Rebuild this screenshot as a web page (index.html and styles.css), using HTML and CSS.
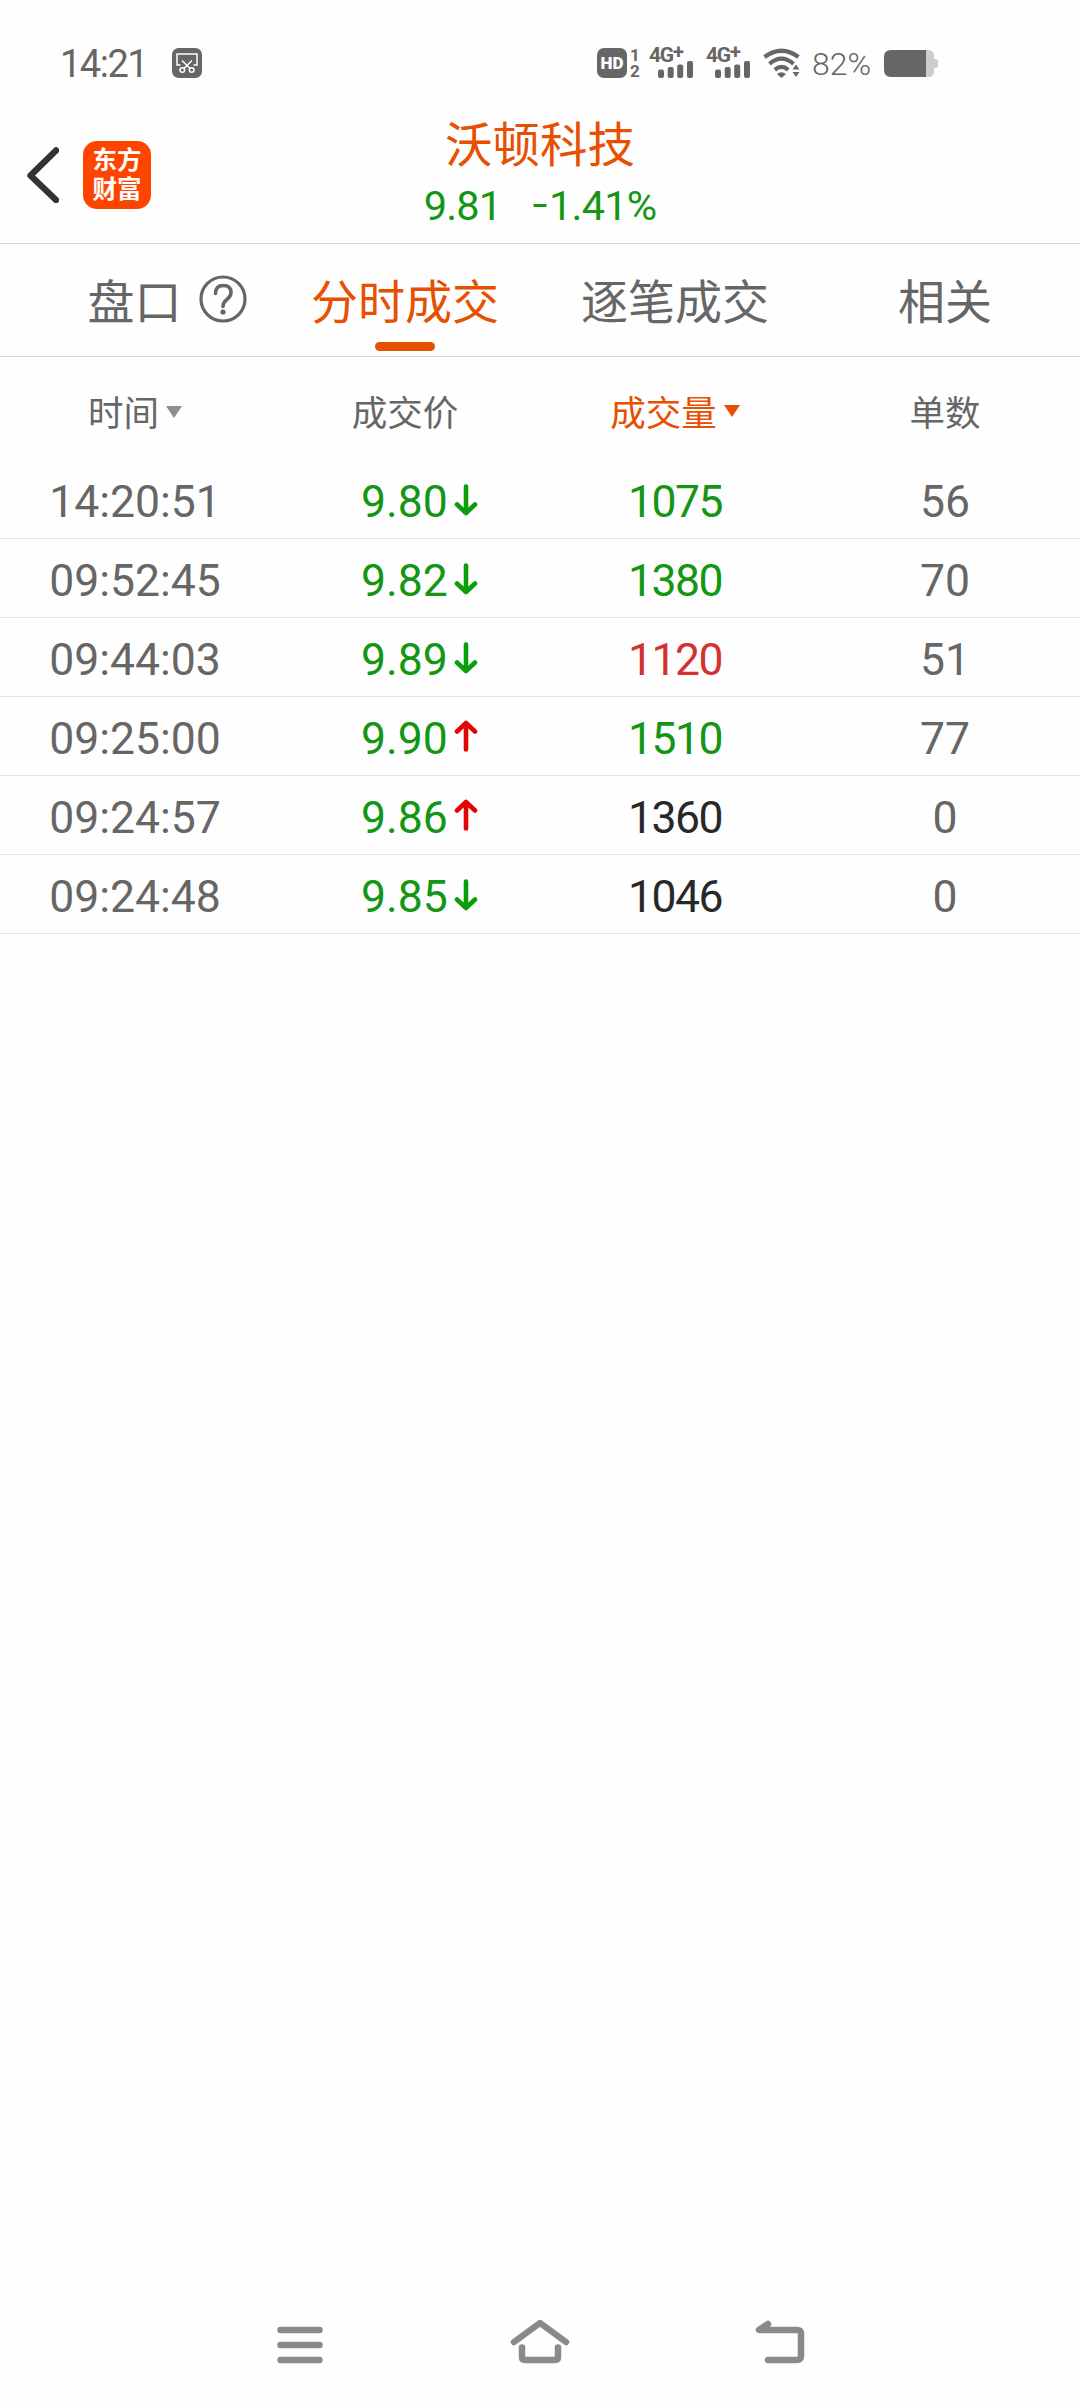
FILE: index.html
```
<!DOCTYPE html>
<html lang="zh-CN">
<head>
    <meta charset="UTF-8">
    <meta name="viewport" content="width=device-width, initial-scale=1.0">
    <title>沃顿科技 - 分时成交</title>
    <link rel="stylesheet" href="styles.css">
</head>
<body>

    <svg class="sprite" xmlns="http://www.w3.org/2000/svg">
        <symbol id="arrow-down" viewBox="0 0 24 34">
            <path d="M12 3.5V30M3 21.5L12 30L21 21.5" fill="none" stroke="currentColor" stroke-width="4.6" stroke-linecap="round" stroke-linejoin="round"/>
        </symbol>
        <symbol id="arrow-up" viewBox="0 0 24 34">
            <path d="M12 30.5V4M3 12.5L12 4L21 12.5" fill="none" stroke="currentColor" stroke-width="4.6" stroke-linecap="round" stroke-linejoin="round"/>
        </symbol>
        <symbol id="signal" viewBox="0 0 36 17">
            <rect x="0" y="8.5" width="6" height="8.5" rx="2"/>
            <rect x="9.7" y="6" width="6" height="11" rx="2"/>
            <rect x="19.2" y="3.5" width="6" height="13.5" rx="2"/>
            <rect x="29" y="0" width="6" height="17" rx="2"/>
        </symbol>
    </svg>

    <div class="status-bar">
        <span class="clock">14:21</span>
        <svg class="clip-icon" viewBox="0 0 30 30">
            <rect width="30" height="30" rx="6.5" fill="#666"/>
            <g fill="none" stroke="#fff" stroke-width="1.5">
                <path d="M8.5 17H5V6H25V17H21.5"/>
                <path d="M10 12.5L18 20.5M20 12.5L12 20.5"/>
                <circle cx="10.3" cy="22" r="2.3"/>
                <circle cx="19.7" cy="22" r="2.3"/>
            </g>
        </svg>
        <div class="status-right">
            <span class="hd">HD</span>
            <span class="sims"><span>1</span><span>2</span></span>
            <span class="net"><span class="net-type">4G<sup>+</sup></span><svg class="bars"><use href="#signal"/></svg></span>
            <span class="net"><span class="net-type">4G<sup>+</sup></span><svg class="bars"><use href="#signal"/></svg></span>
            <svg class="wifi" viewBox="0 0 37 30">
                <g fill="none" stroke="#666" stroke-width="4.2">
                    <path d="M1.5 9Q18.5 -3.5 35.5 9"/>
                    <path d="M6.5 15.8Q18.5 5.5 30.5 15.8"/>
                    <path d="M11.8 21.8Q18.5 16 25.2 21.8"/>
                </g>
                <path d="M14 26Q18.5 22.5 23 26L18.5 30Z" fill="#666"/>
                <path d="M29.5 21.5L33 16.5L36.5 21.5ZM29.5 24L33 29L36.5 24Z" fill="#666"/>
            </svg>
            <span class="percent">82%</span>
            <svg class="battery" viewBox="0 0 54 27">
                <path d="M41 0H44Q50 0 50 6V9H51.5Q54 9 54 11V16Q54 18 51.5 18H50V21Q50 27 44 27H41Z" fill="#ccc"/>
                <path d="M7 0H42V27H7Q0 27 0 20V7Q0 0 7 0Z" fill="#666"/>
            </svg>
        </div>
    </div>

    <header class="header">
        <div class="header-left">
            <svg class="back" viewBox="0 0 32 56">
                <path d="M29 3.5L3.5 28.5L29 53" fill="none" stroke="#333" stroke-width="6.4" stroke-linecap="round" stroke-linejoin="round"/>
            </svg>
            <div class="logo">东方<br>财富</div>
        </div>
        <div class="stock">
            <h1>沃顿科技</h1>
            <p class="quote"><span>9.81</span><span class="change"><span class="minus">-</span>1.41%</span></p>
        </div>
    </header>

    <nav class="tabs">
        <a class="tab">盘口
            <svg class="help" viewBox="0 0 48 48">
                <circle cx="24" cy="24" r="22" fill="none" stroke="#666" stroke-width="3.2"/>
                <path d="M16.5 18.5Q16.5 10.5 24.2 10.5Q32 10.5 32 17.5Q32 21 28 24.5Q24 27.5 24 31.5" fill="none" stroke="#666" stroke-width="3.6" stroke-linecap="round"/>
                <circle cx="24" cy="37" r="2.6" fill="#666"/>
            </svg>
        </a>
        <a class="tab active">分时成交</a>
        <a class="tab">逐笔成交</a>
        <a class="tab">相关</a>
    </nav>

    <main class="trades">
        <div class="row head">
            <span>时间<i class="caret"></i></span>
            <span>成交价</span>
            <span class="sorted">成交量<i class="caret"></i></span>
            <span>单数</span>
        </div>
        <div class="row">
            <span class="time">14:20:51</span>
            <span class="price">9.80<svg class="arrow down"><use href="#arrow-down"/></svg></span>
            <span class="volume sell">1075</span>
            <span>56</span>
        </div>
        <div class="row">
            <span class="time">09:52:45</span>
            <span class="price">9.82<svg class="arrow down"><use href="#arrow-down"/></svg></span>
            <span class="volume sell">1380</span>
            <span>70</span>
        </div>
        <div class="row">
            <span class="time">09:44:03</span>
            <span class="price">9.89<svg class="arrow down"><use href="#arrow-down"/></svg></span>
            <span class="volume buy">1120</span>
            <span>51</span>
        </div>
        <div class="row">
            <span class="time">09:25:00</span>
            <span class="price">9.90<svg class="arrow up"><use href="#arrow-up"/></svg></span>
            <span class="volume sell">1510</span>
            <span>77</span>
        </div>
        <div class="row">
            <span class="time">09:24:57</span>
            <span class="price">9.86<svg class="arrow up"><use href="#arrow-up"/></svg></span>
            <span class="volume">1360</span>
            <span>0</span>
        </div>
        <div class="row">
            <span class="time">09:24:48</span>
            <span class="price">9.85<svg class="arrow down"><use href="#arrow-down"/></svg></span>
            <span class="volume">1046</span>
            <span>0</span>
        </div>
    </main>

    <footer class="nav-bar">
        <svg viewBox="0 0 60 44">
            <path d="M10.5 10H49.5M10.5 25H49.5M10.5 40H49.5"/>
        </svg>
        <svg viewBox="0 0 60 44">
            <path d="M4 22L30 3L56 22M12 27.5V37Q12 40 15 40H45Q48 40 48 37V27.5"/>
        </svg>
        <svg viewBox="0 0 60 44">
            <path d="M18 4L9 10H47Q51 10 51 14V36Q51 40 47 40H18"/>
        </svg>
    </footer>

</body>
</html>
```
FILE: styles.css
```
* {
    box-sizing: border-box;
}

body {
    margin: 0;
    height: 2408px;
    display: flex;
    flex-direction: column;
    background-color: #fefefe;
    color: #666;
    font-family: Roboto, "Noto Sans CJK SC", sans-serif;
    font-weight: 400;
}

.sprite {
    display: none;
}

/* Barra de estado */
.status-bar {
    display: flex;
    align-items: center;
    height: 114px;
    padding: 12px 142px 0 60px;
}

.clock {
    padding-top: 1px;
    font-size: 38px;
    width: 112px;
    letter-spacing: -1.5px;
}

.clip-icon {
    width: 30px;
    height: 30px;
}

.status-right {
    display: flex;
    align-items: center;
    margin-left: auto;
    fill: #666;
}

.hd {
    width: 30px;
    height: 30px;
    border-radius: 7px;
    background-color: #666;
    color: #fff;
    font-size: 17px;
    font-weight: 900;
    line-height: 31px;
    text-align: center;
}

.sims {
    display: flex;
    flex-direction: column;
    width: 12px;
    margin-left: 2px;
    font-size: 17px;
    font-weight: 700;
    line-height: 16px;
    text-align: center;
}

.net {
    display: flex;
    flex-direction: column;
    width: 45px;
    height: 30px;
    margin-left: 8px;
    margin-right: 4px;
}

.net-type {
    font-size: 21px;
    font-weight: 700;
    line-height: 14px;
    height: 13px;
    letter-spacing: -1.2px;
}

.net-type sup {
    font-size: 20px;
    line-height: 0;
    vertical-align: 3px;
}

.bars {
    width: 36px;
    height: 17px;
    flex-shrink: 0;
    margin-left: 9px;
}

.wifi {
    width: 37px;
    height: 30px;
    margin-left: 8px;
}

.percent {
    width: 72px;
    margin-left: 12px;
    padding-top: 2px;
    font-size: 32px;
    font-weight: 300;
}

.battery {
    width: 54px;
    height: 27px;
}

/* Cabecera */
.header {
    display: grid;
    grid-template-columns: 270px 1fr 270px;
    height: 130px;
    border-bottom: 1px solid #d4d4d4;
}

.header-left {
    display: flex;
    align-items: center;
    gap: 24px;
    padding: 0 0 7px 27px;
}

.back {
    width: 32px;
    height: 56px;
}

.logo {
    width: 68px;
    height: 68px;
    padding-top: 5px;
    border-radius: 14px;
    background-color: #ff4400;
    color: #fff;
    font-size: 24.5px;
    font-weight: 700;
    line-height: 29px;
    text-align: center;
}

.stock {
    text-align: center;
}

.stock h1 {
    margin: 0;
    padding-top: 2px;
    color: #e65000;
    font-size: 47.5px;
    font-weight: 400;
    line-height: 61px;
}

.quote {
    display: flex;
    justify-content: center;
    gap: 33px;
    margin: 0;
    color: #149614;
    font-size: 41.5px;
    line-height: 58px;
    letter-spacing: -0.8px;
}

.minus {
    display: inline-block;
    margin-right: 4px;
    transform: scaleX(1.3) translateY(-2px);
}

/* Pestañas */
.tabs {
    display: grid;
    grid-template-columns: repeat(4, 1fr);
    height: 113px;
    border-bottom: 1px solid #d4d4d4;
}

.tab {
    position: relative;
    display: flex;
    align-items: center;
    justify-content: center;
    padding-bottom: 4px;
    font-size: 47px;
}

.tab:first-child {
    padding-left: 64px;
}

.help {
    width: 48px;
    height: 48px;
    flex-shrink: 0;
    margin: 2px 0 0 17px;
}

.tab.active {
    color: #e65000;
}

.tab.active::after {
    content: "";
    position: absolute;
    bottom: 5px;
    width: 60px;
    height: 9px;
    border-radius: 5px;
    background-color: #e65000;
}

/* Tabla de operaciones */
.trades {
    flex: 1;
}

.row {
    display: grid;
    grid-template-columns: repeat(4, 1fr);
    height: 79px;
    padding-top: 5px;
    border-bottom: 1px solid #e2e2e2;
    font-size: 44.5px;
}

.row span {
    display: flex;
    align-items: center;
    justify-content: center;
}

.row.head {
    height: 103px;
    padding: 4px 0 0;
    border-bottom: none;
    font-size: 35.5px;
}

.caret {
    margin: 3px 0 0 7px;
    border: 8.5px solid transparent;
    border-top: 12px solid #8e8e93;
    border-bottom: none;
}

.row .sorted {
    color: #e65000;
}

.sorted .caret {
    margin-top: 1px;
    border-top-color: #e65000;
}

.row .price {
    padding-left: 29px;
    color: #149614;
}

.arrow {
    width: 24px;
    height: 34px;
    margin: 0 0 4px 6px;
}

.arrow.down {
    color: #0a9e0a;
}

.arrow.up {
    margin-bottom: 5px;
    color: #e10505;
}

.volume {
    color: #282828;
    letter-spacing: -1.5px;
}

.volume.sell {
    color: #149614;
}

.volume.buy {
    color: #d23232;
}

/* Navegación del sistema */
.nav-bar {
    display: flex;
    justify-content: center;
    gap: 180px;
    height: 88px;
    fill: none;
    stroke: #8a8a8a;
    stroke-width: 6.5;
    stroke-linecap: round;
    stroke-linejoin: round;
}

.nav-bar svg {
    width: 60px;
    height: 44px;
}
```
